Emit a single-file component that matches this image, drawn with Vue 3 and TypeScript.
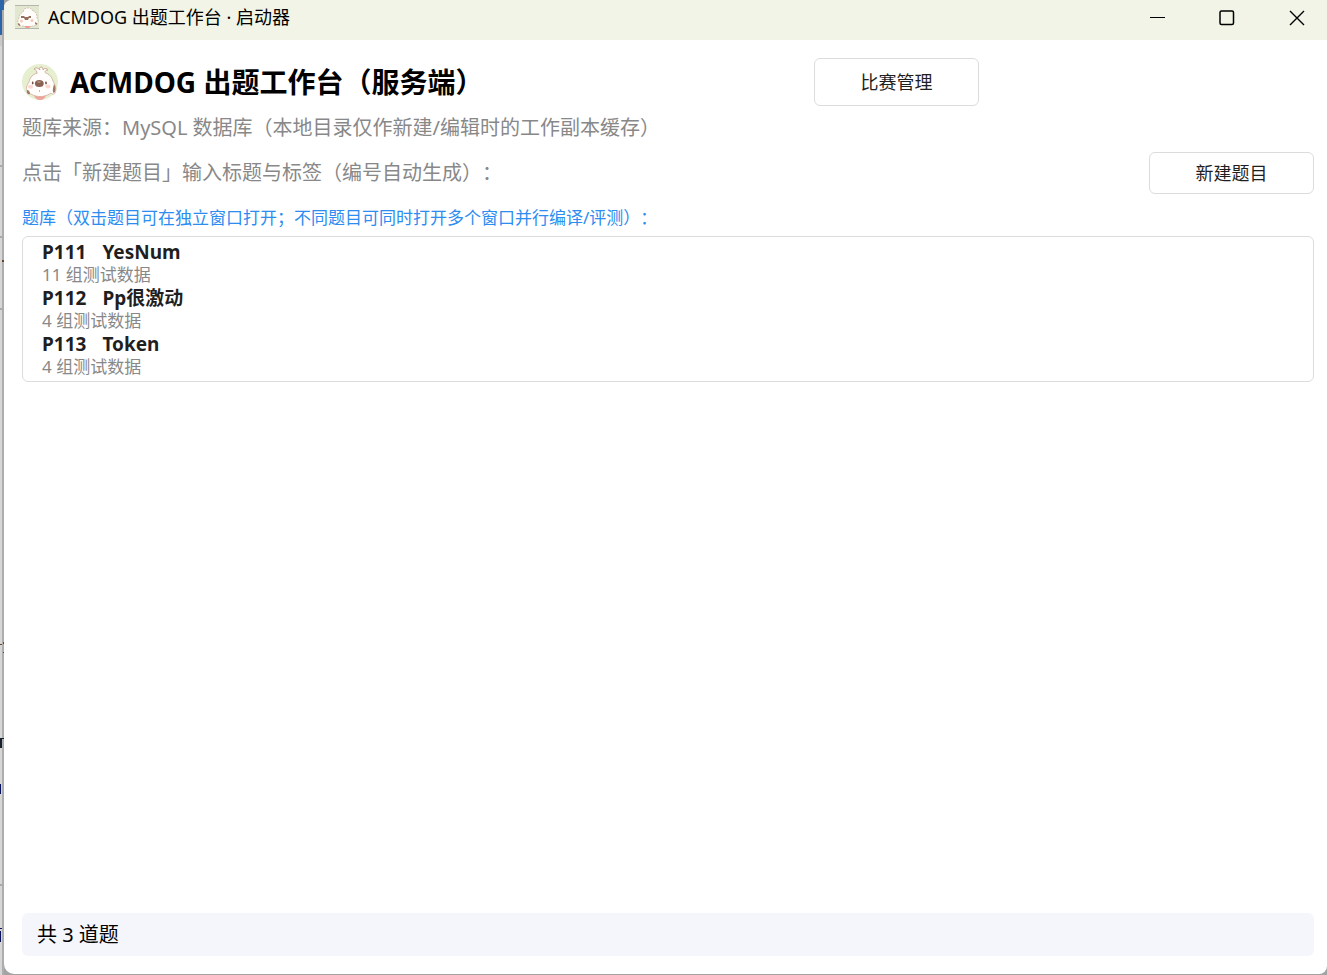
<script setup lang="ts">
import { ref, computed } from 'vue'

interface Problem {
  id: string
  title: string
  groups: number
}

const problems = ref<Problem[]>([
  { id: 'P111', title: 'YesNum', groups: 11 },
  { id: 'P112', title: 'Pp很激动', groups: 4 },
  { id: 'P113', title: 'Token', groups: 4 },
])

const status = computed(() => `共 ${problems.value.length} 道题`)
</script>

<template>
  <div class="desktop">
    <svg class="behind" width="4" height="975" viewBox="0 0 4 975" aria-hidden="true">
      <path d="M0 0h4v35H0z" fill="#2b64a8" />
      <path d="M0 35h4v11H0z" fill="#c9c9c9" />
      <path d="M0 165h4v2H0zM0 236h4v2H0zM0 308h4v2H0zM0 884h4v2H0z" fill="#aaa" />
      <path d="M2 10h2v965H2z" fill="#adadad" />
      <path d="M2 260h2v2H2zM0 644h2v1H0zM3 642h1v2H3zM3 652h1v1H3z" fill="#6b4328" />
      <path d="M0 738h2v10H0zM2 738h2v1H2z" fill="#17202c" />
      <path d="M0 784h1v10H0zM0 928h2v1H0zM0 931h1v11H0z" fill="#07105c" />
    </svg>
    <div class="window">
      <header class="titlebar">
        <svg class="app-icon" viewBox="0 0 24 24" aria-hidden="true">
          <path d="M0 0h24v24H0z" fill="#e1e8cf" />
          <path d="M0 0h24v1H0zM0 23h24v1H0z" fill="#b5b6ad" />
          <path d="M4 20c-2-3-1-5 0-7 0-3 2-5 4-6l1-3 3-1 3 0 2 2 3 2c2 2 2 4 2 6 2 3 1 6-1 7-4 2-13 2-17 0z" fill="#fffdfa" stroke="#cfb4a7" stroke-width=".8" stroke-dasharray="2 1" />
          <path d="M6 11h3l1 1h3l1-1h2v2h-2l-1 2H10l-1-2H6z" fill="#96705f" />
          <path d="M3 18l2 1v2l-2-1zM20 17l2 1v2l-2-1z" fill="#a47c6c" />
          <circle cx="6.5" cy="16" r="1.6" fill="#f5c9bd" />
          <circle cx="17" cy="15.5" r="1.6" fill="#f5c9bd" />
          <path d="M9 21h7l-2 2h-3z" fill="#ee9c93" />
        </svg>
        <span class="caption">ACMDOG 出题工作台 · 启动器</span>
        <div class="controls">
          <button type="button" aria-label="最小化">
            <svg width="16" height="16" viewBox="0 0 16 16"><path d="M1 7.5h15" /></svg>
          </button>
          <button type="button" aria-label="最大化">
            <svg width="16" height="16" viewBox="0 0 16 16"><rect x="1" y="1" width="13.5" height="13.5" rx="1.5" stroke-width="1.5" /></svg>
          </button>
          <button type="button" aria-label="关闭">
            <svg width="16" height="16" viewBox="0 0 16 16"><path d="M1 1l14 14M15 1L1 15" stroke-width="1.4" /></svg>
          </button>
        </div>
      </header>

      <main class="content">
        <div class="heading">
          <div class="brand">
            <svg class="avatar" viewBox="0 0 36 36" aria-hidden="true">
              <circle cx="18" cy="18" r="18" fill="#e6efd0" />
              <path d="M6 28C3 25 5 21 7 18c1-5 4-8 9-9 7-2 13 1 15 8 2 4 4 8 2 12-1 2-3 1-4 0-5 4-14 5-20 1-1 0-2-1-3-2z" fill="#fffefd" stroke="#d0ab9b" stroke-width=".8" stroke-linejoin="round" />
              <path d="M15 10c0-2-1-4-3-5 2-2 4-1 6 1-1-2 0-3 1-3 2 0 2 2 2 3 1-2 4-2 5 0-2 0-3 1-3 4z" fill="#fffefd" />
              <path d="M15 9c0-2-1-3-3-4 2-2 4-1 6 1-1-2 0-3 1-3 2 0 2 2 2 3 1-2 4-2 5 0-2 0-3 1-3 2" fill="none" stroke="#c49c8a" stroke-width=".9" stroke-linecap="round" />
              <path d="M5 26c2 0 3 2 3 4-2 1-4-1-3-4zM32 20c2 3 2 7 0 9-2-1-1-5 0-9z" fill="#a07869" />
              <ellipse cx="17.3" cy="19.5" rx="4.4" ry="3.6" fill="#8b6154" />
              <ellipse cx="17" cy="17.9" rx="1.8" ry="1" fill="#ad8e82" />
              <ellipse cx="10.7" cy="19" rx=".9" ry="1.4" fill="#785448" />
              <ellipse cx="24" cy="19" rx=".9" ry="1.4" fill="#785448" />
              <ellipse cx="8.5" cy="22.8" rx="2.6" ry="2" fill="#fbd8d2" />
              <ellipse cx="26" cy="22.5" rx="2.6" ry="2" fill="#fbd8d2" />
              <path d="M17 26h1v2h-1z" fill="#d6b3a8" />
              <path d="M12 31.5c4 1.500 8 1.500 12 0-1 2.500-3 4.500-6 4.500s-5-2-6-4.500z" fill="#f0a39c" />
            </svg>
            <h1>ACMDOG 出题工作台（服务端）</h1>
          </div>
          <button type="button" class="btn tall">比赛管理</button>
        </div>

        <p class="note">题库来源：MySQL 数据库（本地目录仅作新建/编辑时的工作副本缓存）</p>

        <div class="create">
          <p class="note">点击「新建题目」输入标题与标签（编号自动生成）：</p>
          <button type="button" class="btn">新建题目</button>
        </div>

        <h2>题库（双击题目可在独立窗口打开；不同题目可同时打开多个窗口并行编译/评测）：</h2>

        <ul class="problems">
          <li v-for="p in problems" :key="p.id">
            <strong><span>{{ p.id }}</span><span>{{ p.title }}</span></strong>
            <small>{{ p.groups }} 组测试数据</small>
          </li>
        </ul>

        <footer class="status">{{ status }}</footer>
      </main>
    </div>
  </div>
</template>

<style>
html,
body,
#app {
  height: 100%;
}
body {
  margin: 0;
}
</style>

<style scoped>
.desktop {
  position: relative;
  box-sizing: border-box;
  min-height: 100%;
  display: flex;
  padding: 0 0 1px 4px;
  overflow: hidden;
  background: linear-gradient(to right, #d6d6d6 4px, #a3a3a3 4px);
  font-family: "Noto Sans", "Noto Sans CJK SC", sans-serif;
  text-spacing-trim: space-all;
  color: #000;
}
.behind {
  position: absolute;
  left: 0;
  top: 0;
}
.window {
  position: relative;
  flex: 1;
  min-width: 0;
  display: flex;
  flex-direction: column;
  overflow: hidden;
  background: #fff;
  border-radius: 8px 0 8px 10px;
}
.titlebar {
  display: flex;
  align-items: center;
  height: 40px;
  padding-left: 11px;
  background: #f1f4e6;
}
.app-icon {
  width: 24px;
  height: 24px;
  margin: 0 9px 6px 0;
}
.caption {
  padding-bottom: 6px;
  font-size: 18px;
  line-height: 24px;
  white-space: nowrap;
}
.controls {
  display: flex;
  gap: 10px;
  margin-left: auto;
  padding-bottom: 5px;
}
.controls button {
  width: 60px;
  height: 35px;
  display: grid;
  place-items: center;
  padding: 0;
  border: 0;
  background: none;
}
.controls svg {
  fill: none;
  stroke: #000;
}
.content {
  flex: 1;
  display: flex;
  flex-direction: column;
  padding: 18px 13px 18px 18px;
}
.heading {
  display: grid;
  grid-template-columns: minmax(0, 1fr) 165px 335px;
  align-items: center;
}
.brand {
  display: flex;
  align-items: center;
  gap: 12px;
}
.avatar {
  width: 36px;
  height: 36px;
}
h1 {
  margin: 0;
  font-size: 28px;
  line-height: 36px;
  font-weight: 700;
  white-space: nowrap;
}
.btn {
  box-sizing: border-box;
  width: 165px;
  height: 42px;
  padding: 0 0 2px;
  border: 1px solid #dcdcdc;
  border-radius: 6px;
  background: #fff;
  color: #1f1f1f;
  font: inherit;
  font-size: 18px;
}
.tall {
  height: 48px;
}
.note {
  margin: 8px 0 0;
  font-size: 20px;
  line-height: 28px;
  color: #888;
}
.create {
  display: flex;
  align-items: center;
  justify-content: space-between;
  margin-top: 10px;
}
.create .note {
  margin: 0;
}
h2 {
  margin: 12px 0 0;
  font-size: 17px;
  line-height: 24px;
  font-weight: 400;
  color: #2d8cf0;
}
.problems {
  margin: 6px 0 0;
  padding: 3px 19px;
  border: 1px solid #dcdcdc;
  border-radius: 6px;
  list-style: none;
}
.problems li {
  display: flex;
  flex-direction: column;
}
.problems strong {
  display: flex;
  gap: 16px;
  font-size: 19px;
  line-height: 24px;
  color: #1f1f1f;
}
.problems small {
  font-size: 17px;
  line-height: 22px;
  color: #888;
}
.status {
  margin-top: auto;
  padding: 0 15px;
  border-radius: 6px;
  background: #f5f6fb;
  font-size: 20px;
  line-height: 43px;
}
</style>
